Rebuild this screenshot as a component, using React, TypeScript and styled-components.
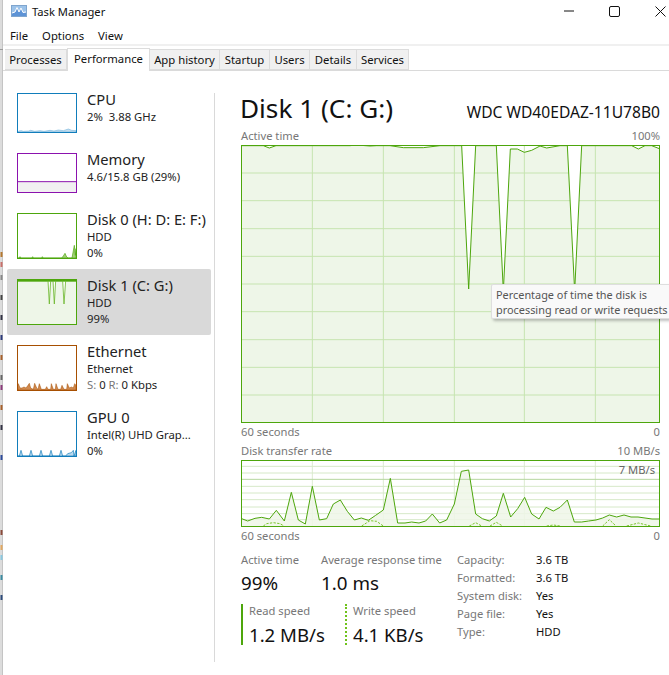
import React from "react";
import styled, { createGlobalStyle } from "styled-components";

const Global = createGlobalStyle`
  html, body { margin: 0; padding: 0; background: #fff; }
  body { font-family: "Noto Sans", "Open Sans", "Liberation Sans", sans-serif; font-size: 11.3px; color: #1a1a1a; }
  * { box-sizing: border-box; }
`;

const GREEN = "#4DA60C";
const LIGHT = "#EEF6E8";
const GRID = "#C6E4B0";

const Root = styled.div`
  width: 669px; height: 675px; display: flex; overflow: hidden; background: #fff;
`;
const BackStrip = styled.div`
  width: 3px; flex: none; background: #dcdcdc; border-right: 1px solid #c4c4c4;
  svg { display: block; }
`;
const Window = styled.div`
  flex: 1; min-width: 0; display: flex; flex-direction: column; background: #fff; position: relative;
`;
const TitleBar = styled.div`
  height: 22px; display: flex; align-items: center; padding-left: 8px; color: #111;
`;
const TitleText = styled.span`
  margin-left: 5px; font-size: 11.2px;
`;
const Controls = styled.div`
  margin-left: auto; display: flex; align-items: center; margin-right: 3px; gap: 35px;
  svg { display: block; }
`;
const MenuBar = styled.div`
  height: 22px; display: flex; align-items: center; padding: 4px 0 0 7px; gap: 14px; color: #111;
`;
const Separator = styled.div`
  height: 2px; background: #f0f0f0;
`;
const TabStrip = styled.div`
  height: 25px; display: flex; align-items: flex-end; padding-left: 2px; position: relative;
  &::after { content: ""; position: absolute; left: 0; right: 0; bottom: 0; height: 1px; background: #dadada; }
`;
const Tab = styled.div<{ $w: number; $active?: boolean }>`
  width: ${(p) => p.$w}px;
  height: ${(p) => (p.$active ? 23 : 21)}px;
  margin-bottom: ${(p) => (p.$active ? 0 : 1)}px;
  display: flex; align-items: center; justify-content: center; white-space: nowrap;
  background: ${(p) => (p.$active ? "#fff" : "#f0f0f0")};
  border: 1px solid #dcdcdc;
  border-left-width: ${(p) => (p.$active ? 1 : 0)}px;
  border-bottom-width: ${(p) => (p.$active ? 0 : 1)}px;
  position: relative; z-index: 1; color: #111;
  padding-bottom: ${(p) => (p.$active ? 3 : 0)}px;
`;
const Body = styled.div`
  flex: 1; display: flex; min-height: 0;
`;
const Sidebar = styled.div`
  width: 211px; flex: none; padding: 12px 3px 0 4px; display: flex; flex-direction: column;
`;
const Row = styled.div<{ $tall?: boolean; $selected?: boolean }>`
  height: ${(p) => (p.$tall ? 66 : 60)}px; display: flex; padding: 10px 0 0 10px; border-radius: 2px;
  background: ${(p) => (p.$selected ? "#d9d9d9" : "transparent")};
`;
const Thumb = styled.div<{ $color: string; $tall?: boolean }>`
  width: 60px; height: ${(p) => (p.$tall ? 46 : 40)}px; flex: none; border: 1px solid ${(p) => p.$color}; background: #fff;
  svg { display: block; width: 100%; height: 100%; }
`;
const RowText = styled.div`
  margin-left: 10px; display: flex; flex-direction: column; margin-top: -4px; white-space: nowrap;
`;
const RowTitle = styled.div`
  font-size: 14.7px; line-height: 20px; color: #222;
`;
const RowSub = styled.div`
  line-height: 16px; color: #222;
`;
const Dim = styled.span`
  color: #777;
`;
const Divider = styled.div`
  width: 1px; flex: none; background: #d9d9d9; margin: 22px 0 13px;
`;
const Main = styled.div`
  flex: 1; min-width: 0; padding: 19px 9px 0 26px; display: flex; flex-direction: column;
`;
const Header = styled.div`
  height: 38px; display: flex; justify-content: space-between; align-items: baseline; white-space: nowrap;
`;
const Heading = styled.div`
  font-size: 26.2px; line-height: 36px; color: #111; margin-left: -1px;
`;
const Model = styled.div`
  font-size: 15.6px; color: #111;
`;
const ChartLabels = styled.div<{ $top?: number; $h?: number }>`
  display: flex; justify-content: space-between; align-items: center; color: #777; font-size: 11.2px;
  height: ${(p) => p.$h ?? 17}px; margin-top: ${(p) => p.$top ?? 0}px; padding-bottom: 2px;
`;
const Chart = styled.div<{ $h: number }>`
  height: ${(p) => p.$h}px; border: 1px solid ${GREEN}; position: relative; background: #fff;
  svg { display: block; width: 100%; height: 100%; }
`;
const Tooltip = styled.div`
  position: absolute; left: 249px; top: 138px; width: 178px; height: 35px; padding: 2px 0 0 4px;
  background: #f9f9f9; border: 1px solid #dedede; border-right: 0; border-radius: 2px 0 0 2px; box-shadow: 2px 2px 3px rgba(0,0,0,.25);
  color: #555; font-size: 10.9px; line-height: 15px; white-space: nowrap; z-index: 2;
`;
const ScaleNote = styled.div`
  position: absolute; right: 4px; top: 1px; font-size: 11.2px; color: #666; line-height: 15px;
`;
const Stats = styled.div`
  display: flex; margin-top: 6px;
`;
const StatsLeft = styled.div`
  width: 216px; flex: none; display: flex; flex-direction: column;
`;
const StatRow = styled.div`
  display: flex;
`;
const Stat = styled.div<{ $w: number }>`
  width: ${(p) => p.$w}px; flex: none; white-space: nowrap; padding-top: 1px;
`;
const SpeedRow = styled.div`
  display: flex; margin-top: 7px;
`;
const Speed = styled.div<{ $w: number; $dotted?: boolean }>`
  width: ${(p) => p.$w}px; height: 41px; flex: none; padding-left: 6px; white-space: nowrap;
  border-left: ${(p) => (p.$dotted ? `2px dotted #6fc21c` : `2px solid ${GREEN}`)};
`;
const StatLabel = styled.div`
  color: #777; font-size: 11.2px; line-height: 16px;
`;
const SpeedLabel = styled(StatLabel)`
  margin-top: -1px;
`;
const StatValue = styled.div`
  font-size: 18.8px; line-height: 28px; color: #111; margin-top: 1px;
`;
const SpeedValue = styled(StatValue)`
  font-size: 18.6px; margin-top: 3px; line-height: 26px;
`;
const Facts = styled.div`
  display: grid; grid-template-columns: 79px auto; grid-auto-rows: 18px; align-items: center; margin-top: -1px; font-size: 11.2px;
`;
const FactKey = styled.div`
  color: #777;
`;
const FactVal = styled.div`
  color: #111;
`;

const chips: [number, string][] = [
  [252, "#b5782f"], [262, "#c9706a"], [275, "#888"], [295, "#444"], [315, "#334"], [335, "#2c3a7a"], [355, "#a7602a"],
  [375, "#666"], [385, "#8a3a7a"], [405, "#a7602a"], [425, "#334"], [455, "#2c4a9a"], [530, "#8a4a3a"], [545, "#e2a860"],
  [555, "#89c8e0"], [575, "#3a8aa0"], [595, "#2c4a7a"],
];

const range = (from: number, to: number, step: number) => {
  const out: number[] = [];
  for (let v = from; v <= to + 0.5; v += step) out.push(Math.round(v));
  return out;
};

const activeLine =
  "36,183 100,183 118,190 138,183 360,183 380,181 420,184 440,183 480,183 520,189 580,189 630,183 695,183 716,613 737,183 799,183 820,620 841,193 862,193 883,203 905,197 930,184 950,190 990,183 1012,183 1034,620 1055,183 1205,183 1225,193 1245,183 1265,183 1288,192";

const readLine =
  "35,297 53,304 75,296 95,293 118,298 139,272 163,304 184,218 205,301 226,313 247,200 268,301 290,297 310,253 331,241 352,275 373,301 394,295 415,302 437,287 460,271 481,176 503,310 525,310 545,307 567,310 587,304 607,283 629,310 650,301 673,253 694,155 716,151 737,283 757,297 778,304 799,289 820,221 842,292 863,267 884,233 905,283 927,298 948,263 970,274 990,263 1012,241 1033,307 1055,307 1076,304 1098,301 1118,295 1138,286 1160,292 1182,286 1203,292 1224,292 1245,295 1266,298 1288,298";

const writeLines = [
  "100,319 110,312 130,309 150,312 162,319",
  "395,319 420,303 440,305 460,319",
  "718,319 737,309 755,319",
  "780,319 799,308 818,319",
  "950,319 970,316 990,319",
  "1118,319 1138,300 1158,319",
  "1190,319 1225,310 1262,319",
];

const VERTS = [247, 460, 673, 883, 1096];

const ActiveChart = () => (
  <svg viewBox="36 184 1251 828" preserveAspectRatio="none">
    <polygon points={`${activeLine} 1288,1014 36,1014`} fill={LIGHT} />
    {VERTS.map((x) => <line key={x} x1={x} x2={x} y1={184} y2={1014} stroke={GRID} strokeWidth={3} />)}
    {range(265, 932, 83.3).map((y) => <line key={y} x1={36} x2={1287} y1={y} y2={y} stroke={GRID} strokeWidth={3} />)}
    <polygon points="695,184 716,613 737,184" fill="#fff" />
    <polygon points="799,184 820,620 841,193" fill="#fff" />
    <polygon points="1012,184 1034,620 1055,184" fill="#fff" />
    <polyline points={activeLine} fill="none" stroke={GREEN} strokeWidth={3} />
  </svg>
);

const RateChart = () => (
  <svg viewBox="36 124 1251 195" preserveAspectRatio="none">
    {VERTS.map((x) => <line key={x} x1={x} x2={x} y1={124} y2={319} stroke="#DCEBD0" strokeWidth={3} />)}
    {[140, 160, 200, 220, 240, 262, 282, 300].map((y) => (
      <line key={y} x1={36} x2={1287} y1={y} y2={y} stroke="#D6E9C8" strokeWidth={3} />
    ))}
    <polygon points={`${readLine} 1288,320 35,320`} fill={LIGHT} fillOpacity={0.85} />
    <line x1={36} x2={1287} y1={179} y2={179} stroke="#B5D69E" strokeWidth={3} />
    <polyline points={readLine} fill="none" stroke={GREEN} strokeWidth={3} />
    {writeLines.map((p) => (
      <polyline key={p} points={p} fill="none" stroke="#7CC62E" strokeWidth={3} strokeDasharray="7 4" />
    ))}
  </svg>
);

const ThumbCpu = () => (
  <svg viewBox="54 282 174 114" preserveAspectRatio="none">
    <polygon
      points="54,396 56,393 64,392 70,394 86,393 92,391 104,394 120,392 132,394 150,391 162,393 175,390 190,392 205,387 215,391 228,392 228,396"
      fill="#C4DDEE" stroke="#5FA8D6" strokeWidth={1.5}
    />
  </svg>
);
const ThumbMemory = () => (
  <svg viewBox="54 462 174 114" preserveAspectRatio="none">
    <rect x={54} y={545} width={174} height={31} fill="#F1F0F1" />
    <line x1={54} x2={228} y1={545} y2={545} stroke="#8B12AE" strokeWidth={3} />
  </svg>
);
const ThumbDisk0 = () => (
  <svg viewBox="54 26 174 132" preserveAspectRatio="none">
    <polygon
      points="54,158 58,158 60,154 62,158 96,158 98,154 100,158 125,158 127,154 129,158 185,158 190,152 195,144 200,155 205,158 216,158 223,120 226,150 228,130 228,158"
      fill="#A4D07C" stroke={GREEN} strokeWidth={2}
    />
  </svg>
);
const ThumbDisk1 = () => (
  <svg viewBox="54 224 174 132" preserveAspectRatio="none">
    <polygon
      points="54,226 144,226 148,296 152,226 159,226 163,296 167,226 188,226 192,296 197,226 228,226 228,358 54,358"
      fill={LIGHT}
    />
    <rect x={54} y={224} width={174} height={5} fill={GREEN} />
    <polyline points="144,226 148,296 152,226" fill="none" stroke="#6DB82F" strokeWidth={2.5} />
    <polyline points="159,226 163,296 167,226" fill="none" stroke="#6DB82F" strokeWidth={2.5} />
    <polyline points="188,226 192,296 197,226" fill="none" stroke="#6DB82F" strokeWidth={2.5} />
  </svg>
);
const ThumbEthernet = () => (
  <svg viewBox="54 422 174 132" preserveAspectRatio="none">
    <polygon
      points="54,554 55,535 60,548 66,548 72,545 78,548 84,540 88,534 92,548 100,552 104,534 110,548 114,552 118,535 124,552 136,552 140,544 144,552 152,552 154,535 160,552 166,552 168,535 174,552 182,552 186,540 192,552 200,552 202,535 208,548 214,545 220,548 224,535 228,540 228,554"
      fill="#D08A50" stroke="#A74F01" strokeWidth={1.5}
    />
  </svg>
);
const ThumbGpu = () => (
  <svg viewBox="54 620 174 132" preserveAspectRatio="none">
    <polygon
      points="54,752 58,752 63,735 68,752 88,752 93,735 98,752 118,752 123,735 128,752 148,752 153,735 158,752 178,752 183,735 188,752 197,752 203,745 214,742 220,735 222,752 228,735 228,752"
      fill="#BBD9EE" stroke="#117DBB" strokeWidth={2}
    />
  </svg>
);

const AppIcon = () => (
  <svg width="16" height="12" viewBox="0 0 16 12">
    <rect x="0.5" y="0.5" width="15" height="11" fill="#9CC3EA" stroke="#7FA5CE" />
    <path d="M1 8 L4 7 L6 2.5 L8 7 L10 3 L12 7.5 L15 7 V11 H1 Z" fill="#5D93D6" />
    <path d="M1 8 L4 7 L6 2.5 L8 7 L10 3 L12 7.5 L15 7" fill="none" stroke="#fff" strokeWidth="1" />
  </svg>
);

export default function App() {
  return (
    <Root>
      <Global />
      <BackStrip>
        <svg width="3" height="675" viewBox="0 0 3 675">
          <rect x="0" y="49" width="3" height="1" fill="#9a9a9a" />
          {chips.map(([y, c]) => <rect key={y} x="0.5" y={y} width="2" height="5" fill={c} />)}
        </svg>
      </BackStrip>
      <Window>
        <TitleBar>
          <AppIcon />
          <TitleText>Task Manager</TitleText>
          <Controls>
            <svg width="10" height="10" viewBox="0 0 10 10"><line x1="0" x2="10" y1="5" y2="5" stroke="#111" /></svg>
            <svg width="11" height="11" viewBox="0 0 11 11"><rect x="0.5" y="0.5" width="10" height="10" rx="1.5" fill="none" stroke="#111" /></svg>
            <svg width="11" height="11" viewBox="0 0 11 11"><path d="M0.5 0.5 L10.5 10.5 M10.5 0.5 L0.5 10.5" stroke="#111" /></svg>
          </Controls>
        </TitleBar>
        <MenuBar>
          <span>File</span>
          <span>Options</span>
          <span>View</span>
        </MenuBar>
        <Separator />
        <TabStrip>
          <Tab $w={62}>Processes</Tab>
          <Tab $w={83} $active>Performance</Tab>
          <Tab $w={70}>App history</Tab>
          <Tab $w={50}>Startup</Tab>
          <Tab $w={40}>Users</Tab>
          <Tab $w={47}>Details</Tab>
          <Tab $w={52}>Services</Tab>
        </TabStrip>
        <Body>
          <Sidebar>
            <Row>
              <Thumb $color="#117DBB"><ThumbCpu /></Thumb>
              <RowText>
                <RowTitle>CPU</RowTitle>
                <RowSub>2%&nbsp; 3.88 GHz</RowSub>
              </RowText>
            </Row>
            <Row>
              <Thumb $color="#8B12AE"><ThumbMemory /></Thumb>
              <RowText>
                <RowTitle>Memory</RowTitle>
                <RowSub>4.6/15.8 GB (29%)</RowSub>
              </RowText>
            </Row>
            <Row $tall>
              <Thumb $color={GREEN} $tall><ThumbDisk0 /></Thumb>
              <RowText>
                <RowTitle>Disk 0 (H: D: E: F:)</RowTitle>
                <RowSub>HDD</RowSub>
                <RowSub>0%</RowSub>
              </RowText>
            </Row>
            <Row $tall $selected>
              <Thumb $color={GREEN} $tall><ThumbDisk1 /></Thumb>
              <RowText>
                <RowTitle>Disk 1 (C: G:)</RowTitle>
                <RowSub>HDD</RowSub>
                <RowSub>99%</RowSub>
              </RowText>
            </Row>
            <Row $tall>
              <Thumb $color="#A74F01" $tall><ThumbEthernet /></Thumb>
              <RowText>
                <RowTitle>Ethernet</RowTitle>
                <RowSub>Ethernet</RowSub>
                <RowSub><Dim>S:</Dim> 0 <Dim>R:</Dim> 0 Kbps</RowSub>
              </RowText>
            </Row>
            <Row $tall>
              <Thumb $color="#117DBB" $tall><ThumbGpu /></Thumb>
              <RowText>
                <RowTitle>GPU 0</RowTitle>
                <RowSub>Intel(R) UHD Grap...</RowSub>
                <RowSub>0%</RowSub>
              </RowText>
            </Row>
          </Sidebar>
          <Divider />
          <Main>
            <Header>
              <Heading>Disk 1 (C: G:)</Heading>
              <Model>WDC WD40EDAZ-11U78B0</Model>
            </Header>
            <ChartLabels>
              <span>Active time</span>
              <span>100%</span>
            </ChartLabels>
            <Chart $h={278}>
              <ActiveChart />
              <Tooltip>
                Percentage of time the disk is<br />processing read or write requests
              </Tooltip>
            </Chart>
            <ChartLabels $h={18}>
              <span>60 seconds</span>
              <span>0</span>
            </ChartLabels>
            <ChartLabels $top={2}>
              <span>Disk transfer rate</span>
              <span>10 MB/s</span>
            </ChartLabels>
            <Chart $h={67}>
              <RateChart />
              <ScaleNote>7 MB/s</ScaleNote>
            </Chart>
            <ChartLabels $h={18}>
              <span>60 seconds</span>
              <span>0</span>
            </ChartLabels>
            <Stats>
              <StatsLeft>
                <StatRow>
                  <Stat $w={80}>
                    <StatLabel>Active time</StatLabel>
                    <StatValue>99%</StatValue>
                  </Stat>
                  <Stat $w={130}>
                    <StatLabel>Average response time</StatLabel>
                    <StatValue>1.0 ms</StatValue>
                  </Stat>
                </StatRow>
                <SpeedRow>
                  <Speed $w={104}>
                    <SpeedLabel>Read speed</SpeedLabel>
                    <SpeedValue>1.2 MB/s</SpeedValue>
                  </Speed>
                  <Speed $w={100} $dotted>
                    <SpeedLabel>Write speed</SpeedLabel>
                    <SpeedValue>4.1 KB/s</SpeedValue>
                  </Speed>
                </SpeedRow>
              </StatsLeft>
              <Facts>
                <FactKey>Capacity:</FactKey><FactVal>3.6 TB</FactVal>
                <FactKey>Formatted:</FactKey><FactVal>3.6 TB</FactVal>
                <FactKey>System disk:</FactKey><FactVal>Yes</FactVal>
                <FactKey>Page file:</FactKey><FactVal>Yes</FactVal>
                <FactKey>Type:</FactKey><FactVal>HDD</FactVal>
              </Facts>
            </Stats>
          </Main>
        </Body>
      </Window>
    </Root>
  );
}
